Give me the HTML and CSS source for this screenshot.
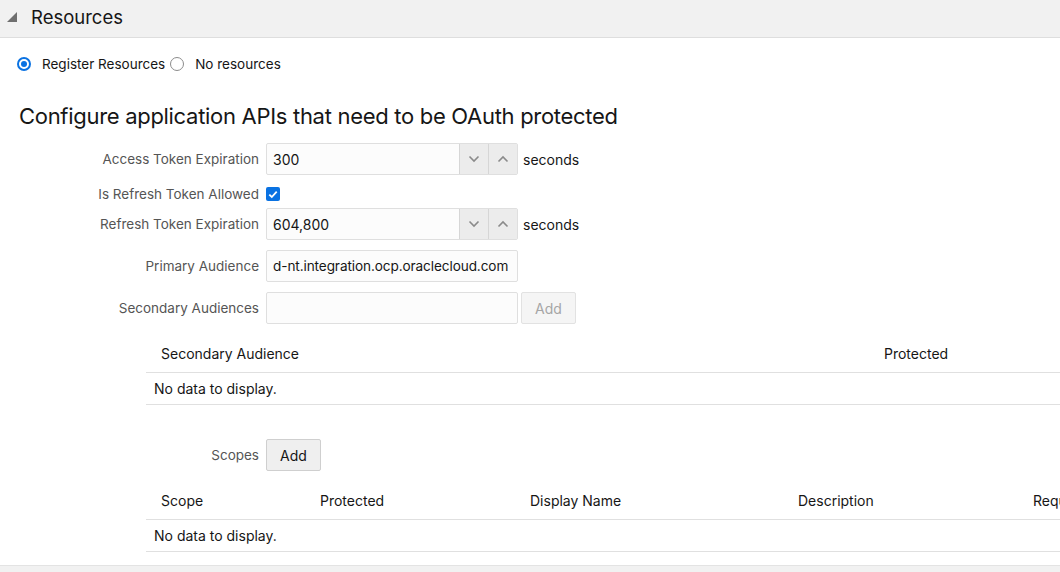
FILE: index.html
```html
<!DOCTYPE html>
<html lang="en">
<head>
<meta charset="utf-8">
<title>Resources</title>
<link rel="stylesheet" href="styles.css">
</head>
<body>
<div class="page">
  <header class="section-head">
    <svg class="disclosure" width="12" height="12" viewBox="0 0 12 12"><polygon points="11,1 11,11 1,11" fill="#6f6f6f"/></svg>
    <h1 class="section-title">Resources</h1>
  </header>

  <div class="content">
    <div class="radio-row">
      <label class="radio">
        <span class="radio-dot on"></span>
        <span>Register Resources</span>
      </label>
      <label class="radio">
        <span class="radio-dot"></span>
        <span>No resources</span>
      </label>
    </div>

    <h2 class="heading">Configure application APIs that need to be OAuth protected</h2>

    <div class="form">
      <div class="row">
        <span class="label">Access Token Expiration</span>
        <div class="control">
          <div class="spin">
            <span class="spin-value">300</span>
            <span class="spin-btn"><svg width="12" height="8" viewBox="0 0 12 8"><polyline points="1.5,1.5 6,6 10.5,1.5" fill="none" stroke="#8a8a8a" stroke-width="1.6"/></svg></span>
            <span class="spin-btn"><svg width="12" height="8" viewBox="0 0 12 8"><polyline points="1.5,6.5 6,2 10.5,6.5" fill="none" stroke="#8a8a8a" stroke-width="1.6"/></svg></span>
          </div>
          <span class="unit">seconds</span>
        </div>
      </div>

      <div class="row row-check">
        <span class="label">Is Refresh Token Allowed</span>
        <div class="control">
          <span class="checkbox"><svg width="10" height="9" viewBox="0 0 10 9"><polyline points="1.3,4.6 3.8,7 8.7,1.6" fill="none" stroke="#fff" stroke-width="1.8"/></svg></span>
        </div>
      </div>

      <div class="row">
        <span class="label">Refresh Token Expiration</span>
        <div class="control">
          <div class="spin">
            <span class="spin-value">604,800</span>
            <span class="spin-btn"><svg width="12" height="8" viewBox="0 0 12 8"><polyline points="1.5,1.5 6,6 10.5,1.5" fill="none" stroke="#8a8a8a" stroke-width="1.6"/></svg></span>
            <span class="spin-btn"><svg width="12" height="8" viewBox="0 0 12 8"><polyline points="1.5,6.5 6,2 10.5,6.5" fill="none" stroke="#8a8a8a" stroke-width="1.6"/></svg></span>
          </div>
          <span class="unit">seconds</span>
        </div>
      </div>

      <div class="row">
        <span class="label">Primary Audience</span>
        <div class="control">
          <div class="text-input">d-nt.integration.ocp.oraclecloud.com</div>
        </div>
      </div>

      <div class="row">
        <span class="label">Secondary Audiences</span>
        <div class="control">
          <div class="text-input"></div>
          <button class="btn btn-disabled" type="button">Add</button>
        </div>
      </div>
    </div>

    <div class="table table-audience">
      <div class="tr th">
        <div class="cell c-aud">Secondary Audience</div>
        <div class="cell c-prot">Protected</div>
      </div>
      <div class="tr td">
        <div class="empty">No data to display.</div>
      </div>
    </div>

    <div class="row scopes-row">
      <span class="label">Scopes</span>
      <div class="control">
        <button class="btn" type="button">Add</button>
      </div>
    </div>

    <div class="table table-scopes">
      <div class="tr th">
        <div class="cell s1">Scope</div>
        <div class="cell s2">Protected</div>
        <div class="cell s3">Display Name</div>
        <div class="cell s4">Description</div>
        <div class="cell s5">Requires Consent</div>
      </div>
      <div class="tr td">
        <div class="empty">No data to display.</div>
      </div>
    </div>
  </div>

  <div class="footer-bar"></div>
</div>
</body>
</html>
```

FILE: styles.css
```css
* { box-sizing: border-box; }

html, body {
  margin: 0;
  padding: 0;
  background: #fff;
  overflow: hidden;
}

body {
  font-family: Inter, "Liberation Sans", Arial, sans-serif;
  font-size: 14px;
  color: #161616;
  width: 1060px;
  height: 572px;
}

.page {
  width: 1060px;
  display: flex;
  flex-direction: column;
}

.section-head {
  height: 38px;
  background: #f1f1f1;
  border-bottom: 1px solid #dedede;
  display: flex;
  align-items: center;
  padding-left: 6px;
}

.disclosure {
  margin-top: -4px;
  margin-right: 13px;
}

.section-title {
  margin: 0;
  font-weight: 400;
  font-size: 18.5px;
  color: #161616;
  line-height: 1;
  margin-top: -2px;
}

.content {
  padding-left: 17px;
  display: flex;
  flex-direction: column;
}

.radio-row {
  display: flex;
  align-items: center;
  height: 26px;
  margin-top: 13px;
}

.radio {
  display: inline-flex;
  align-items: center;
  color: #161616;
  font-size: 13.5px;
}

.radio + .radio { margin-left: 5px; }

.radio-dot {
  width: 14px;
  height: 14px;
  border-radius: 50%;
  border: 1.5px solid #8c8c8c;
  background: #fff;
  margin-right: 11px;
  position: relative;
}

.radio-dot.on {
  border: 2px solid #0a72e2;
}

.radio-dot.on::after {
  content: "";
  position: absolute;
  left: 2px;
  top: 2px;
  width: 6px;
  height: 6px;
  border-radius: 50%;
  background: #0a72e2;
}

.heading {
  margin: 25px 0 0 2px;
  font-weight: 400;
  font-size: 22px;
  line-height: 28px;
  color: #161616;
  letter-spacing: -0.3px;
}

.form {
  display: flex;
  flex-direction: column;
  gap: 10px;
  margin-top: 13px;
}

.row {
  display: flex;
  align-items: center;
  min-height: 32px;
}

.row-check {
  height: 33px;
  min-height: 33px;
  margin-top: -10px;
  margin-bottom: -10px;
  padding-top: 5px;
}

.label {
  width: 242px;
  text-align: right;
  color: #555;
  font-size: 13.5px;
  flex: none;
}

.control {
  margin-left: 7px;
  display: flex;
  align-items: center;
}

.spin {
  width: 252px;
  height: 32px;
  display: flex;
  border: 1px solid #dfdfdf;
  border-radius: 2px;
  background: #fcfcfc;
}

.spin-value {
  flex: 1;
  display: flex;
  align-items: center;
  padding-left: 6px;
  color: #161616;
}

.spin-btn {
  width: 29px;
  display: flex;
  align-items: center;
  justify-content: center;
  background: #ececec;
  border-left: 1px solid #d6d6d6;
}

.unit {
  margin-left: 5px;
  color: #161616;
}

.checkbox {
  width: 14px;
  height: 14px;
  border-radius: 2px;
  background: #0a72e2;
  display: flex;
  align-items: center;
  justify-content: center;
}

.text-input {
  width: 252px;
  height: 32px;
  border: 1px solid #dfdfdf;
  border-radius: 2px;
  background: #fcfcfc;
  display: flex;
  align-items: center;
  padding-left: 6px;
  color: #161616;
  font-size: 13.6px;
  letter-spacing: -0.1px;
  white-space: nowrap;
  overflow: hidden;
}

.btn {
  height: 32px;
  padding: 0 13px;
  font-family: inherit;
  font-size: 14px;
  border: 1px solid #cfcfcf;
  border-radius: 2px;
  background: #efefef;
  color: #161616;
  margin: 0;
}

.btn-disabled {
  margin-left: 3px;
  width: 55px;
  color: #a6a6a6;
  background: #f5f5f5;
  border-color: #e2e2e2;
}

.table {
  margin-left: 129px;
  width: 1100px;
  display: flex;
  flex-direction: column;
}

.tr {
  display: flex;
  align-items: center;
  border-bottom: 1px solid #e0e0e0;
}

.th {
  height: 39px;
}

.td {
  height: 32px;
}

.cell {
  padding-left: 15px;
  color: #161616;
  white-space: nowrap;
  flex: none;
}

.empty {
  padding-left: 8px;
  color: #161616;
}

.table-audience {
  margin-top: 10px;
}

.c-aud { width: 723px; }
.c-prot { width: 200px; }

.scopes-row {
  margin-top: 34px;
}

.table-scopes {
  margin-top: 10px;
}

.s1 { width: 159px; }
.s2 { width: 210px; }
.s3 { width: 268px; }
.s4 { width: 235px; }
.s5 { width: 200px; }

.footer-bar {
  margin-top: 13px;
  height: 20px;
  background: #f1f1f1;
  border-top: 1px solid #e3e3e3;
}
```
